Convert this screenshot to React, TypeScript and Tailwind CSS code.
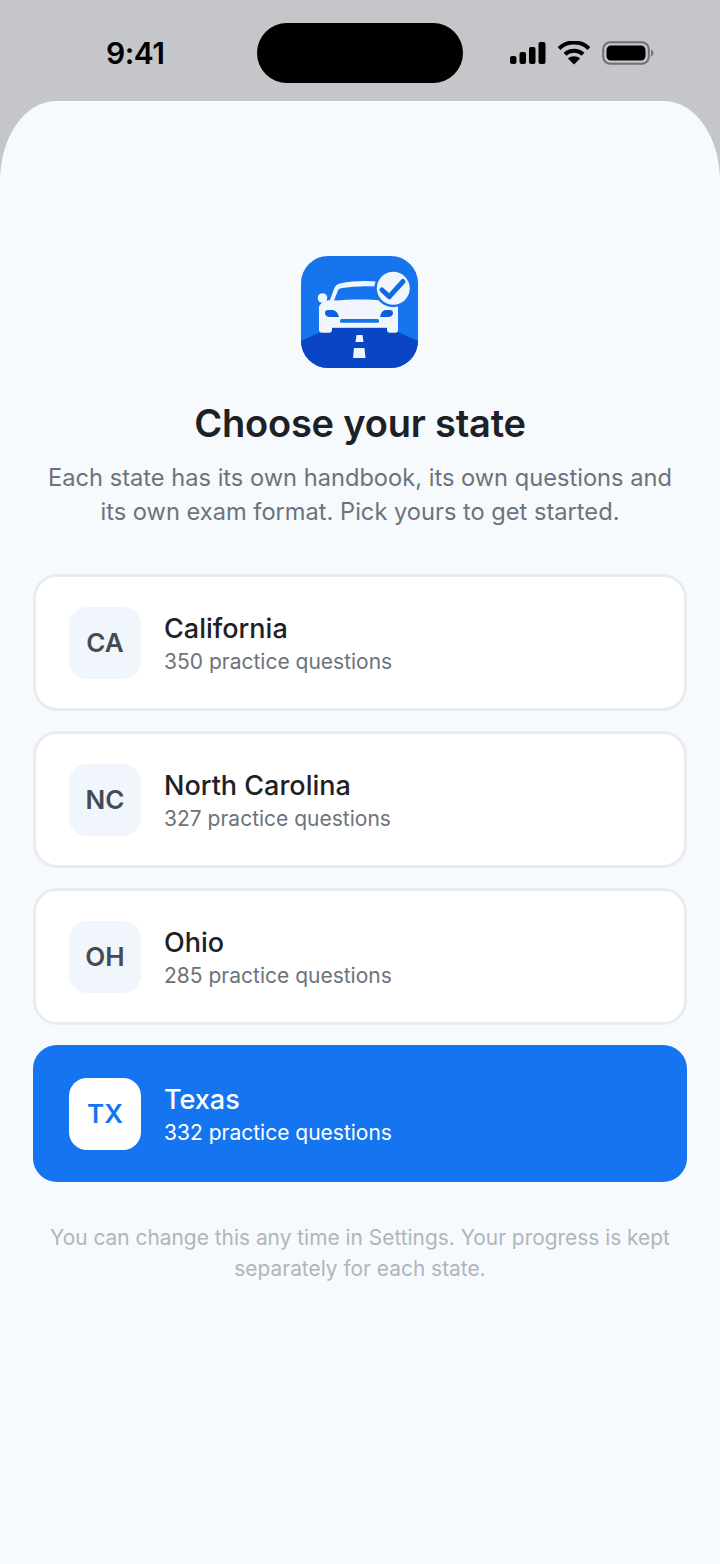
import React from 'react';

const states = [
  { code: 'CA', name: 'California', count: 350 },
  { code: 'NC', name: 'North Carolina', count: 327 },
  { code: 'OH', name: 'Ohio', count: 285 },
  { code: 'TX', name: 'Texas', count: 332, selected: true },
];

function StatusIcons() {
  return (
    <div className="flex items-center">
      {/* signal */}
      <svg width="38" height="24" viewBox="0 0 38 24">
        <rect x="1" y="15" width="6.5" height="8" rx="2" fill="#000" />
        <rect x="10.5" y="11" width="6.5" height="12" rx="2" fill="#000" />
        <rect x="20" y="6" width="6.5" height="17" rx="2" fill="#000" />
        <rect x="29.5" y="1" width="7" height="22" rx="2" fill="#000" />
      </svg>
      {/* wifi */}
      <svg width="32" height="24" viewBox="0 0 32 24" className="ml-[11px]">
        <path d="M1 7.5C5 3.6 10.2 1.5 16 1.5S27 3.6 31 7.5" fill="none" stroke="#000" strokeWidth="4" />
        <path d="M7 13.3C9.4 11 12.5 9.800 16 9.800S22.6 11 25 13.3" fill="none" stroke="#000" strokeWidth="4" />
        <path d="M9.9 17.6C11.6 16 13.7 15.3 16 15.3s4.4.7 6.1 2.3L16 23.5Z" fill="#000" />
      </svg>
      {/* battery */}
      <svg width="52" height="26" viewBox="0 0 52 26" className="ml-[12px]">
        <rect x="1.2" y="2.2" width="45.6" height="21.6" rx="7" fill="none" stroke="#6f7074" strokeWidth="2" />
        <rect x="4.5" y="5.5" width="39" height="15" rx="4.5" fill="#000" />
        <path d="M49 9.5c1.800.5 2.500 2 2.500 3.500s-.7 3-2.500 3.500Z" fill="#77787c" />
      </svg>
    </div>
  );
}

function AppIcon() {
  return (
    <svg width="117" height="112" viewBox="0 0 117 112" className="mr-[1px] block">
      <defs>
        <clipPath id="icon-clip">
          <rect width="117" height="112" rx="27" />
        </clipPath>
      </defs>
      <g clipPath="url(#icon-clip)">
        <rect width="117" height="112" fill="#1574ee" />
        <path d="M0 85 28 72H88L117 85V112H0Z" fill="#0a45c4" />
        <path d="M55.500 79h6l1 7h-8Z" fill="#eef5fd" />
        <path d="M53 92h10.500l1 10h-12.500Z" fill="#eef5fd" />
        {/* car */}
        <path
          d="M29 44 33 33c1-3 3-5 6-5.500 12-2.500 25-3 38-1.800 2 .2 3 1 4 3l8 15c5 1 8 4 8 8v22c0 2-1 3-2.500 3H89c-2 0-3-1-3-3v-2H31v2c0 2-1 3-3 3h-7c-2 0-3-1-3-3V52c0-4 4-7 11-8Z"
          fill="#f1f6fd"
        />
        <path d="M33 44.500 37 34.500c.8-1.500 1.500-2 3-2.300 11-2 24-2.500 35-1.700 1.500.1 2 .6 3 2L84 44.500c-16-1.500-35-1.500-51 0Z" fill="#1574ee" />
        <circle cx="21.500" cy="42" r="4.800" fill="#f1f6fd" />
        <path d="M24 57c0-1.700 1-3 3-3h4c3 0 6 2.500 7 7H29c-3 0-5-1.500-5-4Z" fill="#0f5fdc" />
        <path d="M92 57c0-1.700-1-3-3-3h-4c-3 0-5 2.500-6 7h8c3 0 5-1.500 5-4Z" fill="#0f5fdc" />
        <rect x="39" y="63" width="39" height="3.800" rx="1.500" fill="#1574ee" />
        {/* check badge */}
        <circle cx="92.300" cy="32.300" r="19" fill="#1574ee" />
        <circle cx="92.300" cy="32.300" r="16.500" fill="#f1f6fd" />
        <path d="M81 34l7.300 6.700L102 25.500" fill="none" stroke="#1269e4" strokeWidth="5" strokeLinecap="round" strokeLinejoin="round" />
      </g>
    </svg>
  );
}

function StateCard({ code, name, count, selected }: { code: string; name: string; count: number; selected?: boolean }) {
  return (
    <div
      className={`flex h-[137px] items-center gap-[23px] rounded-[24px] border-[3px] pl-[33px] ${
        selected ? 'border-[#1575f0] bg-[#1575f0]' : 'border-[#e8ecf0] bg-white'
      }`}
    >
      <div
        className={`flex h-[72px] w-[72px] items-center justify-center rounded-[18px] text-[26px] font-semibold ${
          selected ? 'bg-white text-[#1575f0]' : 'bg-[#f1f6fd] text-[#454b54]'
        }`}
      >
        {code}
      </div>
      <div className="mt-[2px] flex flex-col">
        <span className={`text-[27px] leading-[34px] font-medium ${selected ? 'text-white' : 'text-[#1d2126]'}`}>{name}</span>
        <span className={`mt-[2px] text-[21px] leading-[28px] ${selected ? 'text-white' : 'text-[#6d737b]'}`}>{count} practice questions</span>
      </div>
    </div>
  );
}

export default function App() {
  return (
    <div className="flex h-[1564px] w-[720px] flex-col overflow-hidden bg-[#c5c6ca] font-['Inter',sans-serif]">
      {/* Status bar */}
      <div className="flex h-[101px] shrink-0 items-start justify-between pt-[23px] pr-[66px] pl-[106px]">
        <span className="mt-[12px] text-[30px] leading-[36px] font-semibold tracking-[-0.5px] text-black">9:41</span>
        <div className="ml-[46px] h-[60px] w-[206px] rounded-[30px] bg-black" />
        <div className="mt-[17px]">
          <StatusIcons />
        </div>
      </div>

      {/* Sheet */}
      <div className="flex flex-1 flex-col items-center rounded-t-[56px_80px] bg-[#f6fafd] px-[33px] pt-[155px]">
        <AppIcon />
        <h1 className="mt-[33px] text-[38px] leading-[44px] font-semibold tracking-[-0.2px] text-[#1d2126]">Choose your state</h1>
        <p className="mt-[16px] text-center text-[23.65px] leading-[34px] text-[#6d737b]">
          Each state has its own handbook, its own questions and
          <br />
          its own exam format. Pick yours to get started.
        </p>

        <div className="mt-[45px] flex w-full flex-col gap-[20px]">
          {states.map((s) => (
            <StateCard key={s.code} {...s} />
          ))}
        </div>

        <p className="mt-[40px] text-center text-[20.9px] leading-[31px] text-[#b0b5bc]">
          You can change this any time in Settings. Your progress is kept
          <br />
          separately for each state.
        </p>
      </div>
    </div>
  );
}
